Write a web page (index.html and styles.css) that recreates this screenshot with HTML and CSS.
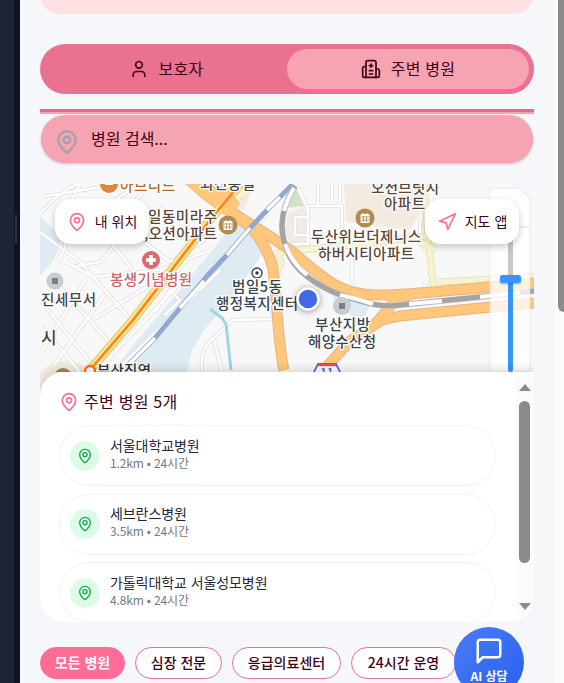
FILE: index.html
```html
<!DOCTYPE html>
<html lang="ko">
<head>
<meta charset="utf-8">
<title>주변 병원</title>
<link rel="stylesheet" href="styles.css">
</head>
<body>
<svg class="defs" width="0" height="0" aria-hidden="true">
  <symbol id="pin" viewBox="0 0 24 24"><path d="M20 10c0 4.99-5.54 10.19-7.4 11.8a1 1 0 0 1-1.2 0C9.54 20.19 4 14.99 4 10a8 8 0 0 1 16 0"/><circle cx="12" cy="10" r="3"/></symbol>
</svg>
<div class="app">
  <aside class="rail"><i></i></aside>
  <main class="page">
    <div class="banner"></div>
    <nav class="tabs">
      <div class="tab"><svg class="icon" width="20" height="20" viewBox="0 0 24 24"><circle cx="12" cy="7" r="4"/><path d="M19 21v-2a4 4 0 0 0-4-4H9a4 4 0 0 0-4 4v2"/></svg><span>보호자</span></div>
      <div class="tab active"><svg class="icon" width="20" height="20" viewBox="0 0 24 24"><path d="M12 6v4M14 14h-4M14 18h-4M14 8h-4"/><path d="M18 12h2a2 2 0 0 1 2 2v6a2 2 0 0 1-2 2H4a2 2 0 0 1-2-2v-9a2 2 0 0 1 2-2h2"/><path d="M18 22V4a2 2 0 0 0-2-2H8a2 2 0 0 0-2 2v18"/></svg><span>주변 병원</span></div>
    </nav>
    <div class="rule"></div>
    <div class="search"><svg class="icon" width="26" height="26"><use href="#pin"/></svg><span>병원 검색...</span></div>

    <section class="card">
      <div class="map">
        <svg class="tiles" width="494" height="188" viewBox="40 184 494 188">
          <rect x="40" y="184" width="494" height="188" fill="#f8f8f8"/>
          <path class="water" d="M238 220L251 228L264 252L230 300L204 330L192 350L187 372H112L135 343L190 278L225 235ZM40 216L62 238L55 258L40 276Z"/>
          <path class="water" d="M329 285L370 305L362 322L336 306Z"/>
          <path fill="#f3ebe1" d="M288 213L304 206L311 246L291 250L285 230ZM344 184H422V210L410 230L346 222ZM223 184H254L244 210L228 205ZM40 372Q62 353 84 366V372Z"/>
          <path fill="#d0e3c8" d="M295 186L304 206L287 208Z"/>
          <g class="lane-edge">
            <path d="M40 232L80 262L136 326M80 184Q70 202 62 222M57 262L65 248V225M40 214Q60 190 78 184M66 262L93 277L160 270L211 250M76 266L100 262L128 230L165 207M40 354L86 279M54 365L105 294M40 300L98 372M40 325L80 372M55 281L118 352M88 372L190 257M96 372L200 262M142 240L170 262L205 240M112 244L133 270M94 319L170 273M155 312L170 290L180 300L165 315M122 365L220 270M202 372Q200 346 214 338L232 320L273 319M214 340L222 372M298 187L308 210V244H292M308 206H342V248M308 217H295V235H308M318 184V206H340V184M352 252V284M332 184V200M420 220V242L430 255M434 270L424 285M40 197L120 184M140 184L112 202M146 188L130 208"/>
          </g>
          <g class="lane">
            <path d="M40 232L80 262L136 326M80 184Q70 202 62 222M57 262L65 248V225M40 214Q60 190 78 184M66 262L93 277L160 270L211 250M76 266L100 262L128 230L165 207M40 354L86 279M54 365L105 294M40 300L98 372M40 325L80 372M55 281L118 352M88 372L190 257M96 372L200 262M142 240L170 262L205 240M112 244L133 270M94 319L170 273M155 312L170 290L180 300L165 315M122 365L220 270M202 372Q200 346 214 338L232 320L273 319M214 340L222 372M298 187L308 210V244H292M308 206H342V248M308 217H295V235H308M318 184V206H340V184M352 252V284M332 184V200M420 220V242L430 255M434 270L424 285M40 197L120 184M140 184L112 202M146 188L130 208"/>
          </g>
          <path class="stream" d="M210 309L222 318L226 324L231 370"/>
          <path class="minor-edge" d="M276 253L310 249L380 242L426 236M424 184L428 238L434 290M228 205L250 188M278 254L281 264L275 274M420 242L436 250M438 282L534 277"/>
          <path class="minor" d="M276 253L310 249L380 242L426 236M424 184L428 238L434 290M228 205L250 188M278 254L281 264L275 274M420 242L436 250M438 282L534 277"/>
          <g class="major-edge">
            <path d="M233 214C250 225 264 239 272 265C277 290 277 340 284 370M236 215C270 236 286 246 302 260C330 284 345 295 378 295S430 292 534 283M322 372L350 341L382 320L400 316L470 309L534 303M375 324L395 301L415 293"/>
          </g>
          <path class="major-edge-fill" d="M184 183H211L236 207L258 229L249 232L226 216L205 201Z"/>
          <g class="major">
            <path d="M233 214C250 225 264 239 272 265C277 290 277 340 284 370M236 215C270 236 286 246 302 260C330 284 345 295 378 295S430 292 534 283M322 372L350 341L382 320L400 316L470 309L534 303M375 324L395 301L415 293"/>
          </g>
          <path fill="#ffc77b" d="M186 184H211L235 207L254 227L249 230L226 215L205 200Z"/>
          <path class="metro-edge" d="M89 371L133 320L170 272L210 220L240 184"/>
          <path class="metro" d="M89 371L133 320L170 272L210 220L240 184"/>
          <path fill="#ffc77b" d="M209 193L224 184L240 203L233 212L222 209Z"/>
          <path class="metro-line" d="M89 371L133 320L170 272L210 220L240 184"/>
          <path class="train" d="M128 365L155 338L180 308L208 275L227 255L250 228L270 207L293 184"/>
          <path class="train-gap" d="M129 364L155 338M180 308L204 281M227 255L250 228M267 210L280 197"/>
          <path class="grey-edge" d="M295 186C277 215 280 237 290 257S330 292 347 297S379 308 400 305L480 297L534 291"/>
          <path class="grey" d="M295 186C277 215 280 237 290 257S330 292 347 297S379 308 400 305L480 297L534 291"/>
          <path class="grey-gap" d="M294 188Q287 200 284 211M285 244Q291 262 307 275M340 295Q358 299 373 304M409 304L442 301M480 297L520 292.500"/>

          <g class="poi">
            <circle cx="109" cy="184" r="9" fill="#d98b3a"/><path d="M105 180h8v5h-8z" fill="#fff"/>
            <circle cx="151" cy="260" r="9" fill="#da6a70"/><path class="cross" d="M151 255v10M146 260h10"/>
            <circle cx="55" cy="281" r="8.5" fill="#c9cbd0"/><path d="M52 278h6v6h-6z" fill="#778087"/>
            <circle cx="342" cy="306" r="9" fill="#c9cbd0"/><path d="M339 303h6v6h-6z" fill="#778087"/>
            <circle cx="228" cy="225" r="9.500" fill="#b18b50"/><circle cx="365" cy="218" r="9.500" fill="#b18b50"/>
            <path d="M224 221.500h8v8h-8zM226 220v3M230 220v3M361 214.500h8v8h-8zM363 213v3M367 213v3" fill="#fff" stroke="#fff"/>
            <path class="grid" d="M224 224h8M224 227h8M226.500 223v6M229.500 223v6M361 217h8M361 220h8M363.500 216v6M366.500 216v6"/>
            <circle cx="63" cy="377" r="9" fill="#a88550"/>
            <circle cx="257" cy="273" r="5" fill="#fff" stroke="#444" stroke-width="1.4"/><circle cx="257" cy="273" r="1.7" fill="#333"/>
            <circle cx="90" cy="371" r="5" fill="#fff" stroke="#ff7420" stroke-width="2.5"/>
            <path d="M318 364H336L341 374H313Z" fill="#fff" stroke="#4a6fe0" stroke-width="1.8"/><path d="M318 365h18" stroke="#e55252" stroke-width="2.5"/>
          </g>
          <g class="labels">
            <text x="120" y="191" textLength="55" fill="#b06b21">아브니드</text>
            <text x="200" y="189" textLength="55" fill="#454545">외전충헐</text>
            <text x="148" y="222" textLength="69">일동미라주</text>
            <text x="144" y="239" textLength="73">,오션아파트</text>
            <text x="110" y="285" textLength="82" fill="#c8646b">봉생기념병원</text>
            <text x="41" y="305" textLength="55" fill="#41484d">진세무서</text>
            <text x="41" y="344" font-size="17" fill="#454545">시</text>
            <text x="97" y="376" textLength="54" fill="#333">부산직역</text>
            <text x="232" y="292" textLength="50" fill="#37434a">범일5동</text>
            <text x="216" y="309" textLength="82" fill="#37434a">행정복지센터</text>
            <text x="371" y="193" textLength="68">오션브릿지</text>
            <text x="384" y="209" textLength="41">아파트</text>
            <text x="311" y="242" textLength="110">두산위브더제니스</text>
            <text x="318" y="259" textLength="96">하버시티아파트</text>
            <text x="315" y="330" textLength="55" fill="#37434a">부산지방</text>
            <text x="308" y="347" textLength="68" fill="#37434a">해양수산청</text>
            <text x="320" y="377" class="route">11</text>
          </g>
          <path d="M490 188H518L530 198V372H490Z" fill="#fff" fill-opacity=".76" stroke="#ddd" stroke-opacity=".6"/>
          <path d="M490 227H530" stroke="#ddd"/>
          <path d="M510.500 230V275" stroke="#c8c8c8" stroke-width="5"/>
          <path d="M510.500 280V369.500" stroke="#3396ff" stroke-width="5" stroke-linecap="round"/>
          <rect class="knob" x="500" y="275" width="21" height="8" rx="2.500"/>
          <circle class="me" cx="308" cy="299" r="10.500"/>
        </svg>
        <div class="map-actions">
          <div class="chip"><svg class="icon" width="20" height="20"><use href="#pin"/></svg><span>내 위치</span></div>
          <div class="chip"><svg class="icon" width="20" height="20" viewBox="0 0 24 24"><path d="M3 11L22 2L13 21L11 13Z"/></svg><span>지도 앱</span></div>
        </div>
      </div>
      <div class="sheet">
        <div class="list">
          <h2><svg class="icon" width="20" height="20"><use href="#pin"/></svg><span>주변 병원 5개</span></h2>
          <article class="hospital"><div class="dot"><svg class="icon" width="16" height="16"><use href="#pin"/></svg></div><div><h3>서울대학교병원</h3><p>1.2km • 24시간</p></div></article>
          <article class="hospital"><div class="dot"><svg class="icon" width="16" height="16"><use href="#pin"/></svg></div><div><h3>세브란스병원</h3><p>3.5km • 24시간</p></div></article>
          <article class="hospital"><div class="dot"><svg class="icon" width="16" height="16"><use href="#pin"/></svg></div><div><h3>가톨릭대학교 서울성모병원</h3><p>4.8km • 24시간</p></div></article>
        </div>
        <div class="scroll"><i class="up"></i><i class="thumb"></i><i class="down"></i></div>
      </div>
    </section>

    <div class="filters">
      <span class="pill on">모든 병원</span><span class="pill">심장 전문</span><span class="pill wide">응급의료센터</span><span class="pill last">24시간 운영</span>
    </div>
  </main>
  <div class="page-scroll"><i></i></div>
  <div class="chat"><svg class="icon" width="30" height="30" viewBox="0 0 24 24"><path d="M21 15a2 2 0 0 1-2 2H7l-4 4V5a2 2 0 0 1 2-2h14a2 2 0 0 1 2 2z"/></svg><span>AI 상담</span></div>
</div>
</body>
</html>
```
FILE: styles.css
```css
* { box-sizing: border-box; }
body { margin: 0; overflow: hidden; font-family: "Noto Sans CJK KR", sans-serif; color: #3c0418; }
h2, h3, p { margin: 0; font-weight: 400; }
.defs { position: absolute; }
.icon { fill: none; stroke: currentColor; stroke-width: 2; stroke-linecap: round; stroke-linejoin: round; flex: none; }

.app { position: relative; display: flex; width: 564px; height: 683px; overflow: hidden; background: #f5f7fb; }
.rail { width: 20px; flex: none; background: #1e2433; border-right: 6px solid #0d1524; display: flex; align-items: center; justify-content: flex-end; }
.rail i { width: 2px; height: 28px; margin: 0 -3px 225px 0; background: #2c3443; }
.page { width: 534px; flex: none; padding: 0 20px; }
.page-scroll { width: 10px; flex: none; background: #fcfcfc; padding-left: 4px; }
.page-scroll i { display: block; height: 312px; width: 12px; background: #8b8b8b; border-radius: 0 0 0 6px; }

.banner { height: 40px; margin-top: -26px; background: #ffe1e1; border-radius: 28px; }
.tabs { display: flex; height: 50px; margin-top: 30px; padding: 5px; border-radius: 25px; background: #eb7190; }
.tab { flex: 1; display: flex; align-items: center; justify-content: center; gap: 10px; border-radius: 21px; font-size: 16px; letter-spacing: .2px; }
.tab.active { background: #f6a3b2; box-shadow: 0 2px 1px #ff6790; }
.tab span { line-height: 20px; margin-bottom: 2px; }
.rule { height: 5px; margin-top: 15px; background: #f6a3b2; border-top: 3px solid #fa608b; }
.search { display: flex; align-items: center; gap: 10px; height: 48px; margin: 1px 1px 0; padding: 0 14px; border-radius: 24px; background: #f6a3b2; box-shadow: 0 1px 3px #0003; font-size: 16px; }
.search span { margin-bottom: 2px; }
.search .icon { color: #a09fae; margin: 5px 0 0 -1px; }
.search span { margin-left: 1px; }

.card { display: flex; flex-direction: column; height: 438px; margin-top: 21px; border-radius: 24px; overflow: hidden; background: #fff; }
.map { position: relative; height: 212px; margin-bottom: -24px; flex: none; background: #f3ebe1; }
.tiles { display: block; }
.map-actions { position: absolute; inset: 15px 15px auto; display: flex; justify-content: space-between; }
.chip { display: flex; align-items: center; justify-content: center; gap: 8px; width: 94px; height: 45px; border-radius: 16px; background: #fff; box-shadow: 0 3px 7px #0003; font-size: 14px; }
.chip span { margin-bottom: 2px; }
.chip .icon { color: #ff6c96; }
.water { fill: #deebf2; }
.lane path, .lane-edge path, .stream, .minor, .minor-edge, .metro, .metro-edge, .metro-line, .major path, .major-edge path, .train, .train-gap, .grey, .grey-edge, .grey-gap { fill: none; stroke-linejoin: round; }
.lane-edge { stroke: #dedede; stroke-width: 4; }
.lane { stroke: #fff; stroke-width: 2.6; }
.stream { stroke: #a0d5e8; stroke-width: 3; }
.minor-edge { stroke: #e2dcb8; stroke-width: 7; }
.minor { stroke: #f8f3cf; stroke-width: 5.5; }
.major-edge { stroke: #efb083; stroke-width: 11; }
.major-edge-fill { fill: #efb083; }
.major { stroke: #ffc77b; stroke-width: 9; }
.metro-edge { stroke: #dcca6e; stroke-width: 9; }
.metro { stroke: #fae88b; stroke-width: 7; }
.metro-line { stroke: #fc8227; stroke-width: 2.6; }
.train { stroke: #91a9d2; stroke-width: 5; }
.train-gap { stroke: #fff; stroke-width: 3.4; }
.grey-edge { stroke: #c9c9c9; stroke-width: 6; }
.grey { stroke: #a4a4a4; stroke-width: 5; }
.grey-gap { stroke: #fff; stroke-width: 4; }
.cross { stroke: #fff; stroke-width: 3.5; }
.grid { stroke: #b18b50; stroke-width: .8; }
.labels { font-size: 14.5px; font-weight: 500; fill: #5b4437; stroke: #fff; stroke-width: 2.5px; stroke-linejoin: round; paint-order: stroke; }
.route { font-size: 12px; fill: #3f60d0; }
.knob { fill: #3396ff; filter: drop-shadow(0 1px 1px #0005); }
.me { fill: #4169e1; stroke: #fff; stroke-width: 2.5; filter: drop-shadow(0 1px 3px #0006); }

.sheet { position: relative; display: flex; height: 250px; background: #fff; border-radius: 24px 0 0; box-shadow: 0 -3px 8px #0002; }
.list { flex: 1; padding: 18px 19px 0 19px; overflow: hidden; }
.list h2 { display: flex; align-items: center; gap: 5px; height: 24px; margin-bottom: 11px; font-size: 16px; letter-spacing: .25px; }
.list h2 span { margin-bottom: 2px; }
.list h2 .icon { color: #ff6c96; }
.hospital { display: flex; align-items: center; gap: 10px; height: 61px; margin-bottom: 7.5px; padding-left: 10px; border: 1px solid #f3f3f4; border-radius: 31px; }
.dot { display: flex; align-items: center; justify-content: center; width: 30px; height: 30px; border-radius: 50%; background: #dcfce7; color: #16a34a; }
.hospital h3 { font-size: 14px; line-height: 20px; margin-top: -5px; letter-spacing: -.08px; color: #1f2937; }
.hospital p { font-size: 12px; line-height: 18px; margin-top: -1px; letter-spacing: -.15px; color: #737983; }
.scroll { width: 19px; background: #fcfcfc; display: flex; flex-direction: column; align-items: center; padding-top: 12px; }
.scroll .up { border: solid transparent; border-width: 0 6.5px 7px; border-bottom-color: #8b8b8b; }
.scroll .thumb { width: 11px; height: 162px; margin: 10px 0 40px; border-radius: 6px; background: #8b8b8b; }
.scroll .down { border: solid transparent; border-width: 7px 6.5px 0; border-top-color: #8b8b8b; }

.filters { display: flex; gap: 10px; margin-top: 25px; }
.pill { flex: none; display: flex; align-items: center; justify-content: center; width: 87px; height: 32px; padding-bottom: 2px; border: 1px solid #ea7393; border-radius: 16px; background: #fff; font-size: 14px; font-weight: 500; }
.pill.on { width: 85px; background: #ff6c96; border-color: #ff6c96; color: #fff; font-weight: 700; }
.pill.wide { width: 109px; }
.pill.last { width: 105px; }
.chat { position: absolute; left: 454px; top: 627px; width: 70px; height: 70px; border-radius: 50%; display: flex; flex-direction: column; align-items: center; padding-top: 9px; background: linear-gradient(135deg, #4b7cf7, #2860ec); color: #fff; font-size: 12px; font-weight: 700; line-height: 20px; }
```
